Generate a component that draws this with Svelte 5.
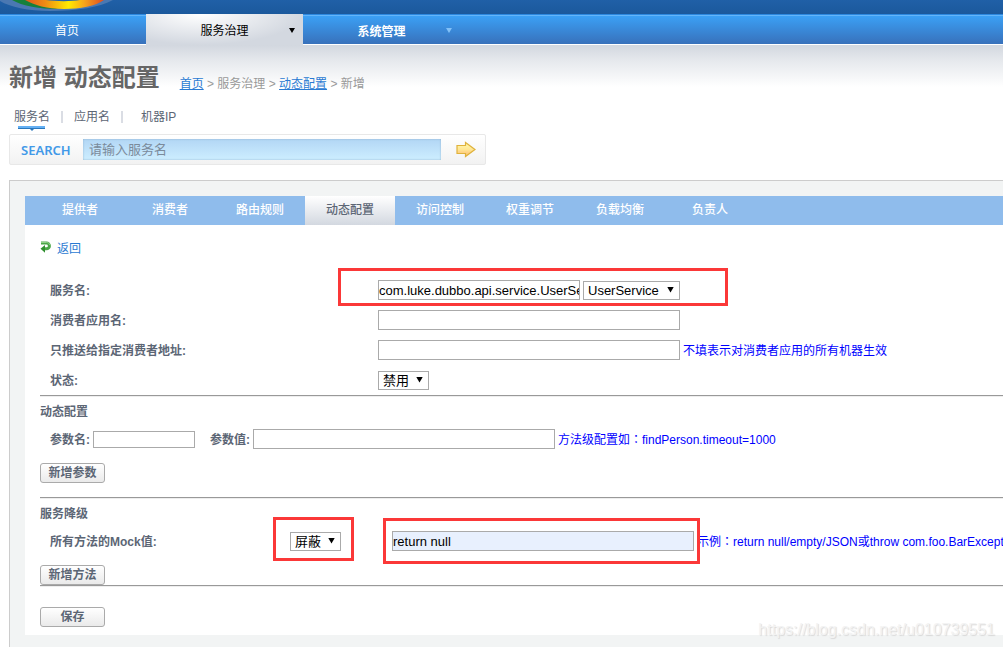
<script lang="ts">
	const searchTypes = ['服务名', '应用名', '机器IP'];
	const tabs = ['提供者', '消费者', '路由规则', '动态配置', '访问控制', '权重调节', '负载均衡', '负责人'];
	const activeTab = '动态配置';

	let searchType = $state('服务名');
	let keyword = $state('');
	let service = $state('com.luke.dubbo.api.service.UserService');
	let application = $state('');
	let address = $state('');
	let paramName = $state('');
	let paramValue = $state('');
	let mock = $state('return null');
</script>

<div class="page">
	<header class="banner">
		<svg class="logo" width="116" height="14" viewBox="0 0 116 14" aria-hidden="true">
			<defs>
				<linearGradient id="ring">
					<stop offset="0" stop-color="#e2561d" />
					<stop offset="0.25" stop-color="#ee8a14" />
					<stop offset="0.55" stop-color="#ffea00" />
					<stop offset="0.75" stop-color="#f7a51a" />
					<stop offset="1" stop-color="#dd4b22" />
				</linearGradient>
			</defs>
			<path d="M0 0H113C100 7 78 11 50 11C28 11 10 7 0 1Z" fill="#4a78b2" />
			<path d="M12 0H36L58 9C40 9 22 6 12 0Z" fill="#16803b" />
			<path d="M25 0H104C96 6 80 9 64 9C47 9 34 5 25 0Z" fill="url(#ring)" />
			<path d="M46 0H80C72 1.500 56 1.500 46 0Z" fill="#2464a8" />
		</svg>
	</header>

	<nav class="nav">
		<a class="home" href="#home">首页</a>
		<a class="active" href="#governance">服务治理<span class="arrow"></span></a>
		<a class="bold" href="#system">系统管理<span class="arrow"></span></a>
	</nav>

	<main>
		<div class="head">
			<h1>新增 动态配置</h1>
			<div class="crumbs">
				<a href="#home">首页</a> &gt; 服务治理 &gt; <a href="#overrides">动态配置</a> &gt; 新增
			</div>
		</div>

		<ul class="types">
			{#each searchTypes as type (type)}
				<li>
					<button type="button" class:current={type === searchType} onclick={() => (searchType = type)}>{type}</button>
				</li>
			{/each}
		</ul>

		<form class="search" onsubmit={(e) => e.preventDefault()}>
			<label for="keyword">SEARCH</label>
			<input id="keyword" placeholder="请输入服务名" bind:value={keyword} />
			<button type="submit" aria-label="搜索">
				<svg width="20" height="17" viewBox="0 0 20 17" aria-hidden="true">
					<defs>
						<linearGradient id="go" x1="0" y1="0" x2="0" y2="1">
							<stop offset="0" stop-color="#fffbb0" />
							<stop offset="0.5" stop-color="#ffe694" />
							<stop offset="1" stop-color="#ffb66c" />
						</linearGradient>
					</defs>
					<path d="M1 4.500H9.500V1.500L19 8.500L9.500 15.500V12.500H1Z" fill="url(#go)" stroke="#dfb23c" stroke-width="1.200" />
				</svg>
			</button>
		</form>

		<div class="panel">
			<div class="inner">
				<nav class="tabs">
					{#each tabs as tab (tab)}
						<a href="#{tab}" class:active={tab === activeTab}>{tab}</a>
					{/each}
				</nav>

				<form class="body" onsubmit={(e) => e.preventDefault()}>
					<a class="back" href="#back">
						<svg width="12" height="12" viewBox="0 0 12 12" aria-hidden="true">
							<path d="M1 2H6.500A2.800 2.800 0 0 1 6.500 7.800H4" fill="none" stroke="#4aa646" stroke-width="3" />
							<path d="M1 1.500H6.500C8.500 1.500 9.500 2.500 9.800 4" fill="none" stroke="#8fcf88" stroke-width="1" />
							<path d="M0.500 7.800L5 4V11.800Z" fill="#2f8f2e" />
						</svg>
						返回
					</a>

					<div class="row">
						<label for="service">服务名:</label>
						<div class="field marked service-mark">
							<input id="service" class="medium" bind:value={service} />
							<span class="select wide">
								<select aria-label="服务"><option>UserService</option></select>
								<span class="caret"></span>
							</span>
						</div>
					</div>
					<div class="row">
						<label for="application">消费者应用名:</label>
						<div class="field"><input id="application" class="long" bind:value={application} /></div>
					</div>
					<div class="row">
						<label for="address">只推送给指定消费者地址:</label>
						<div class="field">
							<input id="address" class="long" bind:value={address} />
							<span class="hint">不填表示对消费者应用的所有机器生效</span>
						</div>
					</div>
					<div class="row">
						<label for="status">状态:</label>
						<div class="field">
							<span class="select">
								<select id="status"><option>禁用</option><option>启用</option></select>
								<span class="caret"></span>
							</span>
						</div>
					</div>
					<hr />

					<h2>动态配置</h2>
					<div class="line">
						<label for="param-name">参数名:</label>
						<input id="param-name" class="short" bind:value={paramName} />
						<label class="second" for="param-value">参数值:</label>
						<input id="param-value" class="long" bind:value={paramValue} />
						<span class="hint">方法级配置如：findPerson.timeout=1000</span>
					</div>
					<button class="btn" type="button">新增参数</button>
					<hr class="spaced" />

					<h2>服务降级</h2>
					<div class="row mock">
						<label for="mock">所有方法的Mock值:</label>
						<div class="marked type-mark">
							<span class="select">
								<select aria-label="Mock类型"><option>屏蔽</option><option>容错</option></select>
								<span class="caret"></span>
							</span>
						</div>
						<div class="field">
							<span class="marked value-mark"><input id="mock" class="long filled" bind:value={mock} /></span>
							<span class="hint">示例：return null/empty/JSON或throw com.foo.BarException</span>
						</div>
					</div>
					<button class="btn" type="button">新增方法</button>
					<hr />
					<button class="btn save" type="submit">保存</button>
				</form>
			</div>
		</div>
	</main>
	<div class="watermark">https://blog.csdn.net/u010739551</div>
</div>

<style>
	:global(body) {
		background: #fff;
	}
	.page {
		position: relative;
		overflow: hidden;
		font: 12px/16px 'Liberation Sans', 'Noto Sans CJK SC', sans-serif;
		color: #5c6675;
	}
	.page * {
		box-sizing: border-box;
	}
	input,
	select,
	button {
		font-family: inherit;
		margin: 0;
	}
	.banner {
		height: 14px;
		background: linear-gradient(#2060a7, #1b599c);
	}
	.logo {
		display: block;
	}
	.nav {
		display: flex;
		height: 31px;
		border-bottom: 1px solid #fff;
		background: linear-gradient(#2c88df 0 1px, #64b5fa 1px 2px, #3ba0f5 2px, #3871bb 100%);
	}
	.nav a {
		position: relative;
		width: 157px;
		line-height: 34px;
		text-align: center;
		color: #fff;
		text-decoration: none;
	}
	.nav .home {
		width: 146px;
		padding-right: 12px;
	}
	.nav .active {
		height: 31px;
		color: #000;
		background: radial-gradient(ellipse at 35% 0, #fff, #d3d8e0 70%);
	}
	.nav .bold {
		line-height: 36px;
		font-weight: bold;
	}
	.arrow,
	.caret {
		position: absolute;
		background: #000;
		clip-path: polygon(0 0, 100% 0, 50% 100%);
	}
	.arrow {
		right: 8px;
		top: 14px;
		width: 6px;
		height: 5px;
	}
	.bold .arrow {
		background: #82c1f8;
	}
	main {
		padding: 17px 0 0 9px;
		background: linear-gradient(#d2d7df, #e6e9ed 16px, #fff 42px);
	}
	.head {
		display: flex;
		align-items: flex-end;
		gap: 20px;
	}
	h1 {
		margin: 0;
		font-size: 24px;
		line-height: 32px;
		color: #666;
	}
	.crumbs {
		padding-bottom: 2px;
		color: #999;
	}
	.crumbs a {
		color: #2a7ad2;
	}
	.types {
		display: flex;
		height: 28px;
		margin: 12px 0 0;
		padding: 0 0 0 5px;
		list-style: none;
	}
	.types li {
		display: flex;
	}
	.types li:not(:last-child)::after {
		content: '';
		width: 2px;
		height: 12px;
		margin: 5px 11px 0;
		background: #dadde4;
	}
	.types li:last-child {
		margin-left: 7px;
	}
	.types button {
		position: relative;
		height: 18px;
		padding: 0;
		border: 0;
		background: none;
		font-size: 12px;
		color: #5c6675;
	}
	.types .current::before {
		content: '';
		position: absolute;
		left: 4px;
		right: 5px;
		top: 20px;
		height: 3px;
		background: linear-gradient(#64b0f4 0 2px, #2a78bd 2px);
	}
	.types .current::after {
		content: '';
		position: absolute;
		left: 16px;
		top: 23px;
		border: 2px solid transparent;
		border-top-color: #2a78bd;
	}
	.search {
		display: flex;
		align-items: center;
		width: 477px;
		height: 31px;
		border: 1px solid #e8e8e8;
		border-radius: 2px;
		background: linear-gradient(#fff, #f2f2f2);
	}
	.search label {
		width: 73px;
		padding-left: 11px;
		font: 600 13px/20px 'Noto Sans', 'Open Sans', sans-serif;
		color: #4299e8;
	}
	.search input {
		width: 358px;
		height: 21px;
		padding: 0 6px;
		border: 0;
		background: linear-gradient(#b2d6f5, #cdeeff);
		box-shadow: inset 0 0 2px #8badc8;
		font-size: 13px;
	}
	.search input::placeholder {
		color: #7b8b9b;
	}
	.search button {
		width: 20px;
		height: 17px;
		margin-left: 15px;
		padding: 0;
		border: 0;
		background: none;
	}
	.search svg {
		display: block;
	}
	.panel {
		margin-top: 15px;
		padding: 15px 0 15px 15px;
		border: solid #ccc;
		border-width: 1px 0 0 1px;
		background: #f2f4f4;
	}
	.inner {
		background: #fff;
	}
	.tabs {
		display: flex;
		padding-left: 10px;
		background: #8fbcec;
	}
	.tabs a {
		width: 90px;
		line-height: 29px;
		text-align: center;
		font-weight: 500;
		color: #fff;
		text-decoration: none;
	}
	.tabs .active {
		color: #5c6675;
		background: linear-gradient(#fff, #d3d8e0);
	}
	.body {
		padding: 16px 0 8px 15px;
	}
	.back {
		display: flex;
		gap: 5px;
		width: max-content;
		margin-bottom: 18px;
		color: #2a7ad2;
		text-decoration: none;
	}
	.row {
		display: grid;
		grid-template-columns: 328px 1fr;
		align-items: center;
		height: 30px;
		padding-left: 10px;
	}
	.row.mock {
		grid-template-columns: 240px 102px 1fr;
	}
	.row label,
	.line label,
	.hint {
		padding-top: 2px;
	}
	.row label,
	.line label {
		font-weight: bold;
	}
	.field,
	.line {
		display: flex;
		align-items: center;
		white-space: nowrap;
	}
	.field {
		gap: 3px;
		min-width: 0;
	}
	.line {
		gap: 3px;
		height: 30px;
		padding-left: 10px;
	}
	.line .second {
		margin-left: 12px;
	}
	.row input,
	.line input {
		width: 302px;
		height: 20px;
		padding: 0;
		border: 1px solid #aaa;
		background: #fff;
		font-size: 13px;
		color: #000;
	}
	.row .medium {
		width: 202px;
	}
	.line .short {
		width: 102px;
		height: 17px;
	}
	.row .filled {
		display: block;
		background: #e8f0fe;
	}
	.select {
		position: relative;
		display: block;
		width: 51px;
		height: 19px;
	}
	.select.wide {
		width: 97px;
	}
	.select select {
		display: block;
		width: 100%;
		height: 19px;
		padding: 0 0 0 4px;
		border: 1px solid #aaa;
		border-radius: 0;
		appearance: none;
		background: #fff;
		font-size: 13px;
		color: #000;
	}
	.caret {
		right: 6px;
		top: 6px;
		width: 7px;
		height: 6px;
		pointer-events: none;
	}
	.hint {
		font-family: 'Liberation Sans', 'Noto Sans CJK TC', sans-serif;
		color: #00f;
	}
	.marked {
		position: relative;
		width: max-content;
	}
	.marked::after {
		content: '';
		position: absolute;
		border: 3px solid #fb3838;
		pointer-events: none;
	}
	.service-mark::after {
		inset: -12px -48px -6px -40px;
	}
	.type-mark::after {
		inset: -15px -13px -10px -17px;
	}
	.value-mark::after {
		inset: -13px -6px -13px -9px;
	}
	hr {
		height: 2px;
		margin: 0;
		border: solid;
		border-width: 1px 0;
		border-color: #999 transparent #eee;
	}
	hr.spaced {
		margin-top: 14px;
	}
	h2 {
		margin: 5px 0 2px;
		font-size: 12px;
		line-height: 20px;
	}
	.btn {
		display: block;
		width: 65px;
		height: 20px;
		margin-top: 9px;
		padding: 0;
		border: 1px solid #aaa;
		border-radius: 3px;
		background: linear-gradient(#fff, #eaeaea);
		font-size: 12px;
		line-height: 16px;
		font-weight: bold;
		color: #5c6675;
	}
	.btn.save {
		margin-top: 20px;
	}
	.watermark {
		position: absolute;
		right: 8px;
		bottom: 12px;
		font-size: 16px;
		color: #f3f3f3;
		text-shadow: 1px 1px 1px #d8d8d8;
	}
</style>
